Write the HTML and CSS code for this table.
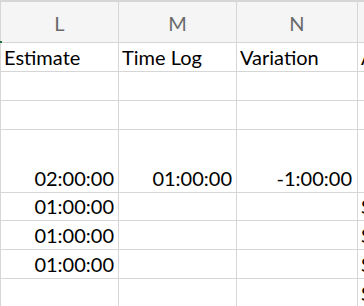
FILE: index.html
```html
<!DOCTYPE html>
<html>
<head>
<meta charset="utf-8">
<link rel="stylesheet" href="styles.css">
</head>
<body>
<div class="sheet">
  <div class="hd">L</div>
  <div class="hd">M</div>
  <div class="hd">N</div>
  <div class="hd"></div>

  <div class="c">Estimate</div>
  <div class="c">Time Log</div>
  <div class="c">Variation</div>
  <div class="c">A</div>

  <div class="c"></div><div class="c"></div><div class="c"></div><div class="c"></div>
  <div class="c"></div><div class="c"></div><div class="c"></div><div class="c"></div>

  <div class="c num">02:00:00</div>
  <div class="c num">01:00:00</div>
  <div class="c num n3">-1:00:00</div>
  <div class="c"></div>

  <div class="c num">01:00:00</div><div class="c"></div><div class="c"></div><div class="c">S</div>
  <div class="c num">01:00:00</div><div class="c"></div><div class="c"></div><div class="c">S</div>
  <div class="c num">01:00:00</div><div class="c"></div><div class="c"></div><div class="c">S</div>
  <div class="c"></div><div class="c"></div><div class="c"></div><div class="c">S</div>
</div>
<div class="sel"></div>
</body>
</html>
```

FILE: styles.css
```css
html, body {
  margin: 0;
  padding: 0;
  background: #ffffff;
  overflow: hidden;
}
.sheet {
  display: grid;
  grid-template-columns: 117px 117px 120px 100px;
  grid-template-rows: 40px 28px 28px 28px 62px 27px 28px 28px 28px;
  gap: 1px;
  padding: 2px 0 0 1px;
  background: #d6d6d6;
  width: 460px;
  font-family: "Lato", "Open Sans", sans-serif;
}
.hd {
  background: #f5f5f5;
  color: #6a6a6a;
  font-size: 20px;
  display: flex;
  align-items: center;
  justify-content: center;
  padding-top: 1px;
}
.c {
  background: #ffffff;
  color: #000000;
  font-size: 20px;
  line-height: 24px;
  display: flex;
  align-items: flex-end;
  padding: 0 3px 2px 3px;
  white-space: nowrap;
  overflow: hidden;
}
.num {
  justify-content: flex-end;
  padding-right: 4px;
}
.n3 {
  padding-right: 5px;
}
.sel {
  position: absolute;
  left: 0;
  top: 41px;
  width: 2px;
  height: 2px;
  background: #1e7145;
}
```
